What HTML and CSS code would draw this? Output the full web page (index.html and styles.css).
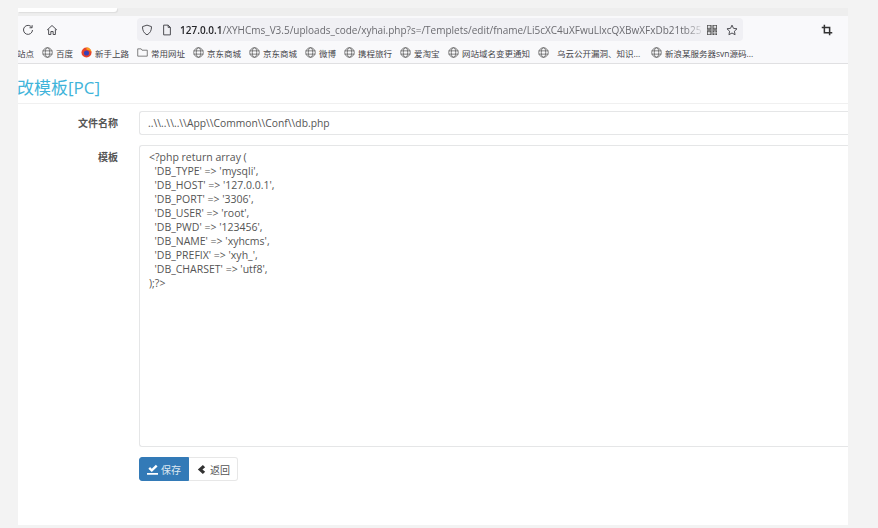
FILE: index.html
```html
<!DOCTYPE html>
<html lang="zh">
<head>
<meta charset="utf-8">
<title>修改模板</title>
<link rel="stylesheet" href="styles.css">
</head>
<body>
<main class="window">
  <div class="tabstrip"><div class="tab"></div></div>
  <div class="toolbar">
    <svg class="ico reload" viewBox="0 0 16 16"><path d="M13 4.500A6 6 0 1 0 14 8" /><path d="M13.500 1.500v3.500H10" /></svg>
    <svg class="ico home" viewBox="0 0 16 16"><path d="M1.500 8 8 2l6.500 6M3.500 7v7h3v-4h3v4h3V7" /></svg>
    <div class="urlbar">
      <svg class="ico shield" viewBox="0 0 16 16"><path d="M8 1.500 14 3.500c0 5-1.500 8.500-6 11-4.500-2.500-6-6-6-11z" /></svg>
      <svg class="ico page" viewBox="0 0 16 16"><path d="M3.500 1.500h6l3 3v10h-9zM9.500 1.500v3h3" /></svg>
      <div class="url"><b>127.0.0.1</b>/XYHCms_V3.5/uploads_code/xyhai.php?s=/Templets/edit/fname/Li5cXC4uXFwuLlxcQXBwXFxDb21tb25</div>
      <svg class="qr" viewBox="0 0 12 12"><path d="M0 0h5v5H0zM1 1v3h3V1zM7 0h5v5H7zM8 1v3h3V1zM0 7h5v5H0zM1 8v3h3V8zM2 2h1v1H2zM9 2h1v1H9zM2 9h1v1H2zM7 7h2v2H7zM10 7h2v2h-2zM7 10h2v2H7zM10 10h2v2h-2zM5.500 0h1v12h-1zM0 5.500h12v1H0z" fill-rule="evenodd" /></svg>
      <svg class="ico star" viewBox="0 0 16 16"><path d="m8 1.500 2 4.300 4.700.6-3.500 3.200.9 4.700L8 12l-4.100 2.300.9-4.700L1.300 6.400 6 5.800z" /></svg>
    </div>
    <svg class="ico crop" viewBox="0 0 16 16"><path d="M4.500 1v10.500H15M1 4.500h10.500V15" /></svg>
  </div>
  <div class="bookmarks">
    <span class="bm bm-cut">站点</span>
    <span class="bm bm-a"><svg class="globe" viewBox="0 0 12 12"><circle cx="6" cy="6" r="5.200" /><ellipse cx="6" cy="6" rx="2.400" ry="5.200" /><path d="M.8 4.200h10.400M.8 7.800h10.400" /></svg>百度</span>
    <span class="bm bm-b"><svg class="fox" viewBox="0 0 12 12"><circle cx="6" cy="6" r="5.500" fill="#e8442a" /><circle cx="6" cy="6.500" r="2.800" fill="#3b3fb5" /><path d="M6 .5a5.500 5.500 0 0 1 5.500 5.500c-1-2-3-3-5.500-3z" fill="#f9a11b" /></svg>新手上路</span>
    <span class="bm bm-c"><svg class="folder" viewBox="0 0 12 12"><path d="M.8 2h3.700l1 1.500h5.700v6.500H.8z" /></svg>常用网址</span>
    <span class="bm bm-d"><svg class="globe" viewBox="0 0 12 12"><circle cx="6" cy="6" r="5.200" /><ellipse cx="6" cy="6" rx="2.400" ry="5.200" /><path d="M.8 4.200h10.400M.8 7.800h10.400" /></svg>京东商城</span>
    <span class="bm bm-d"><svg class="globe" viewBox="0 0 12 12"><circle cx="6" cy="6" r="5.200" /><ellipse cx="6" cy="6" rx="2.400" ry="5.200" /><path d="M.8 4.200h10.400M.8 7.800h10.400" /></svg>京东商城</span>
    <span class="bm bm-e"><svg class="globe" viewBox="0 0 12 12"><circle cx="6" cy="6" r="5.200" /><ellipse cx="6" cy="6" rx="2.400" ry="5.200" /><path d="M.8 4.200h10.400M.8 7.800h10.400" /></svg>微博</span>
    <span class="bm bm-d"><svg class="globe" viewBox="0 0 12 12"><circle cx="6" cy="6" r="5.200" /><ellipse cx="6" cy="6" rx="2.400" ry="5.200" /><path d="M.8 4.200h10.400M.8 7.800h10.400" /></svg>携程旅行</span>
    <span class="bm bm-f"><svg class="globe" viewBox="0 0 12 12"><circle cx="6" cy="6" r="5.200" /><ellipse cx="6" cy="6" rx="2.400" ry="5.200" /><path d="M.8 4.200h10.400M.8 7.800h10.400" /></svg>爱淘宝</span>
    <span class="bm bm-g"><svg class="globe" viewBox="0 0 12 12"><circle cx="6" cy="6" r="5.200" /><ellipse cx="6" cy="6" rx="2.400" ry="5.200" /><path d="M.8 4.200h10.400M.8 7.800h10.400" /></svg>网站域名变更通知</span>
    <span class="bm bm-h"><svg class="globe wide" viewBox="0 0 12 12"><circle cx="6" cy="6" r="5.200" /><ellipse cx="6" cy="6" rx="2.400" ry="5.200" /><path d="M.8 4.200h10.400M.8 7.800h10.400" /></svg>乌云公开漏洞、知识...</span>
    <span class="bm"><svg class="globe" viewBox="0 0 12 12"><circle cx="6" cy="6" r="5.200" /><ellipse cx="6" cy="6" rx="2.400" ry="5.200" /><path d="M.8 4.200h10.400M.8 7.800h10.400" /></svg>新浪某服务器svn源码...</span>
  </div>
  <section class="content">
    <h1 class="title">改模板[PC]</h1>
    <form class="form">
      <div class="row">
        <label class="label">文件名称</label>
        <div class="input">..\\..\\..\\App\\Common\\Conf\\db.php</div>
      </div>
      <div class="row">
        <label class="label">模板</label>
        <pre class="textarea">&lt;?php return array (
  'DB_TYPE' =&gt; 'mysqli',
  'DB_HOST' =&gt; '127.0.0.1',
  'DB_PORT' =&gt; '3306',
  'DB_USER' =&gt; 'root',
  'DB_PWD' =&gt; '123456',
  'DB_NAME' =&gt; 'xyhcms',
  'DB_PREFIX' =&gt; 'xyh_',
  'DB_CHARSET' =&gt; 'utf8',
);?&gt;</pre>
      </div>
      <div class="actions">
        <button type="button" class="btn btn-primary"><svg class="btn-ico" viewBox="0 0 12 12"><path d="M0 9.800h12v2H0zM1.500 5.200l1.800-1.800 1.900 1.900L9.700.8l1.800 1.800L5.200 8.600z" /></svg>保存</button>
        <button type="button" class="btn btn-default"><svg class="btn-ico" viewBox="0 0 12 12"><path d="M7.500 1 10 3.500 7 6l3 2.500L7.500 11 2 6z" /></svg>返回</button>
      </div>
    </form>
  </section>
</main>
</body>
</html>
```
FILE: styles.css
```css
* { box-sizing: border-box; }
html, body { margin: 0; height: 100%; }
body {
  background: #f3f3f3;
  overflow: hidden;
  font-family: "Open Sans", "Noto Sans CJK SC", sans-serif;
  color: #676a6c;
}
.window {
  margin: 8px 30px 0 18px;
  width: 830px;
  height: 517px;
  display: flex;
  flex-direction: column;
  background: #fff;
}
.tabstrip {
  height: 8px;
  background: #eeeeee;
  flex: none;
}
.tab {
  width: 99px;
  height: 4px;
  background: #fff;
  border-radius: 0 0 3px 0;
  box-shadow: 1px 1px 1px #ddd;
}
.toolbar {
  height: 26px;
  flex: none;
  background: #f9f9fb;
  display: flex;
  align-items: center;
  padding: 1px 0 0 4px;
}
.ico {
  width: 12px;
  height: 12px;
  fill: none;
  stroke: #4a4a4f;
  stroke-width: 1.300;
  flex: none;
}
.home { margin-left: 12px; }
.urlbar {
  margin-left: 79px;
  width: 606px;
  height: 23px;
  background: #f0f0f4;
  border-radius: 4px;
  display: flex;
  align-items: center;
  padding-left: 4px;
  flex: none;
}
.page { margin-left: 8px; }
.url {
  margin-left: 7px;
  width: 525px;
  flex: none;
  overflow: hidden;
  white-space: nowrap;
  font-size: 10px;
  color: #6b6b70;
  -webkit-mask-image: linear-gradient(to right, #000 96%, transparent);
  mask-image: linear-gradient(to right, #000 96%, transparent);
}
.url b { color: #26262a; font-weight: 600; }
.qr { width: 10px; height: 10px; margin-left: 2px; fill: #555; flex: none; }
.star { margin-left: 9px; }
.crop { margin-left: 78px; stroke-width: 2; stroke: #333; }
.bookmarks {
  height: 22px;
  flex: none;
  background: #f9f9fb;
  border-bottom: 1px solid #e0e0e2;
  display: flex;
  align-items: center;
  font-size: 8.500px;
  color: #45454a;
  white-space: nowrap;
  overflow: hidden;
}
.bm { display: flex; align-items: center; gap: 3px; flex: none; }
.bm-cut { width: 25px; margin-left: -1px; }
.bm-a { width: 39px; }
.bm-b { width: 56px; }
.bm-c { width: 56px; }
.bm-d { width: 56px; }
.bm-e { width: 39px; }
.bm-f { width: 48px; }
.bm-g { width: 90px; }
.bm-h { width: 113px; }
.globe { width: 11px; height: 11px; fill: none; stroke: #555; stroke-width: .8; flex: none; }
.globe.wide { margin-right: 5px; }
.fox { width: 11px; height: 11px; flex: none; }
.folder { width: 11px; height: 11px; fill: none; stroke: #555; stroke-width: .8; flex: none; }
.content { flex: 1; background: #fff; overflow: hidden; }
.title {
  margin: 0;
  height: 40px;
  padding-top: 11px;
  font-size: 17px;
  line-height: 26px;
  font-weight: 400;
  color: #3fb4da;
  border-bottom: 1px solid #f0f0f0;
  white-space: nowrap;
  text-indent: -1px;
}
.form { padding-top: 7px; }
.row { display: flex; margin-bottom: 10px; }
.label {
  width: 100px;
  flex: none;
  text-align: right;
  font-size: 10px;
  font-weight: 700;
  line-height: 24px;
  color: #555;
}
.input {
  margin-left: 21px;
  flex: 1;
  height: 24px;
  border: 1px solid #e5e6e7;
  border-right: 0;
  border-radius: 3px 0 0 3px;
  font-size: 10.300px;
  line-height: 22px;
  padding-left: 8px;
  color: #555;
}
.textarea {
  margin: 0 0 0 21px;
  flex: 1;
  height: 302px;
  border: 1px solid #e5e6e7;
  border-right: 0;
  border-radius: 3px 0 0 3px;
  padding: 4px 9px;
  font-family: "Open Sans", "Noto Sans CJK SC", sans-serif;
  font-size: 10.500px;
  line-height: 14px;
  color: #555;
}
.actions { margin-left: 121px; display: flex; }
.btn {
  height: 24px;
  font-family: "Noto Sans CJK SC", sans-serif;
  font-size: 10px;
  display: flex;
  align-items: center;
  justify-content: center;
  gap: 3px;
  padding: 0;
  cursor: pointer;
}
.btn-primary {
  width: 50px;
  background: #337ab7;
  color: #dce8f2;
  border: 1px solid #337ab7;
  border-radius: 3px 0 0 3px;
}
.btn-default {
  width: 49px;
  background: #fff;
  color: #555;
  border: 1px solid #e7e7e7;
  border-left: 0;
  border-radius: 0 3px 3px 0;
}
.btn-ico { width: 11px; height: 11px; flex: none; }
.btn-primary .btn-ico { fill: #fff; }
.btn-default .btn-ico { fill: #333; }
```
